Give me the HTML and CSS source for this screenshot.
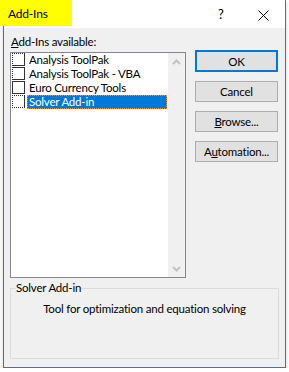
FILE: index.html
```html
<!DOCTYPE html>
<html lang="en">
  <head>
    <meta charset="UTF-8" />
    <meta name="viewport" content="width=device-width, initial-scale=1.0" />
    <title>Add-Ins</title>
    <link rel="stylesheet" href="styles.css">
  </head>
  <body>
    <div class="window">
      <header class="titlebar">
        <span class="title">Add-Ins</span>
        <span class="help">?</span>
        <svg class="close" width="11" height="11" viewBox="0 0 11 11">
          <path d="M0.5 0.5 L10.5 10.5 M10.5 0.5 L0.5 10.5" stroke="#000" stroke-width="1" fill="none" />
        </svg>
      </header>
      <div class="content">
        <div class="label"><u>A</u>dd-Ins available:</div>
        <div class="main">
          <div class="listbox">
            <ul class="items">
              <li><span class="check dot-tl"></span><span class="name">Analysis ToolPak</span></li>
              <li><span class="check dot-l"></span><span class="name">Analysis ToolPak - VBA</span></li>
              <li><span class="check"></span><span class="name">Euro Currency Tools</span></li>
              <li class="selected"><span class="check dot-tlb"></span><span class="name">Solver Add-in</span></li>
            </ul>
            <div class="scrollbar">
              <svg width="9" height="6" viewBox="0 0 9 6">
                <path d="M1 5 L4.5 1.5 L8 5" stroke="#c2c2c2" stroke-width="2" fill="none" />
              </svg>
              <svg width="9" height="6" viewBox="0 0 9 6">
                <path d="M1 1 L4.5 4.5 L8 1" stroke="#c2c2c2" stroke-width="2" fill="none" />
              </svg>
            </div>
          </div>
          <div class="buttons">
            <button class="btn default">OK</button>
            <button class="btn">Cancel</button>
            <button class="btn"><u>B</u>rowse...</button>
            <button class="btn">A<u>u</u>tomation...</button>
          </div>
        </div>
        <fieldset class="group">
          <legend>Solver Add-in</legend>
          <p class="description">Tool for optimization and equation solving</p>
        </fieldset>
      </div>
    </div>
  </body>
</html>
```

FILE: styles.css
```css
body {
  margin: 0;
  background-color: #fff;
  font-family: Lato, "Liberation Sans", sans-serif;
  font-size: 11.5px;
  letter-spacing: -0.2px;
  line-height: 16px;
  color: #000;
}
.window {
  margin-left: 3px;
  width: 283px;
  height: 368px;
  box-sizing: border-box;
  border: 1px solid #1a7fd4;
  border-top: none;
  background-color: #f0f0f0;
  box-shadow: 0 2px 4px rgba(0, 0, 0, 0.18);
  display: flex;
  flex-direction: column;
}
.titlebar {
  height: 28px;
  background-color: #fff;
  display: flex;
  align-items: flex-start;
}
.title {
  margin-left: -4px;
  width: 72px;
  height: 26px;
  box-sizing: border-box;
  padding: 6px 0 0 8px;
  font-size: 12px;
  background-color: #ffff00;
}
.help {
  margin: 6px 0 0 146px;
  font-size: 13px;
}
.close {
  margin: 10px 0 0 34px;
}
.content {
  padding: 6px 6px 0 6px;
  flex: 1;
}
.label {
  padding-left: 1px;
}
.main {
  display: flex;
  align-items: flex-start;
  gap: 9px;
}
.listbox {
  margin-top: 2px;
  width: 176px;
  height: 226px;
  box-sizing: border-box;
  border: 1px solid #828790;
  background-color: #fff;
  display: flex;
}
.items {
  list-style: none;
  margin: 0;
  padding: 0 1px 0 1px;
  flex: 1;
}
.items li {
  display: flex;
  align-items: flex-start;
  height: 14px;
  line-height: 14px;
  white-space: nowrap;
}
.check {
  width: 13px;
  height: 13px;
  box-sizing: border-box;
  border: 1px solid #333;
  background-color: #fff;
}
.dot-tl {
  border-top-style: dotted;
  border-left-style: dotted;
}
.dot-l {
  border-left-style: dotted;
}
.dot-tlb {
  border-top-style: dotted;
  border-left-style: dotted;
  border-bottom-style: dotted;
}
.name {
  margin-left: 2px;
  padding-left: 2px;
  flex: 1;
  height: 14px;
  box-sizing: border-box;
}
.selected .name {
  background-color: #0078d7;
  color: #fff;
  border: 1px dotted #e8913a;
  padding-left: 1px;
  line-height: 12px;
}
.scrollbar {
  width: 17px;
  background-color: #f0f0f0;
  display: flex;
  flex-direction: column;
  justify-content: space-between;
  align-items: center;
  padding: 6px 0 5px;
  box-sizing: border-box;
}
.buttons {
  display: flex;
  flex-direction: column;
  gap: 9px;
}
.btn {
  width: 83px;
  height: 21px;
  padding: 0;
  border: 1px solid #adadad;
  background-color: #e1e1e1;
  font-family: Lato, "Liberation Sans", sans-serif;
  font-size: 11.5px;
  letter-spacing: -0.2px;
  color: #000;
}
.default {
  height: 22px;
  border: 2px solid #0078d7;
}
.group {
  margin: 2px 0 0 0;
  padding: 0 5px;
  border: 1px solid #dcdcdc;
}
.group legend {
  padding: 0;
}
.description {
  margin: 5px 0 41px;
  text-align: center;
}
```
